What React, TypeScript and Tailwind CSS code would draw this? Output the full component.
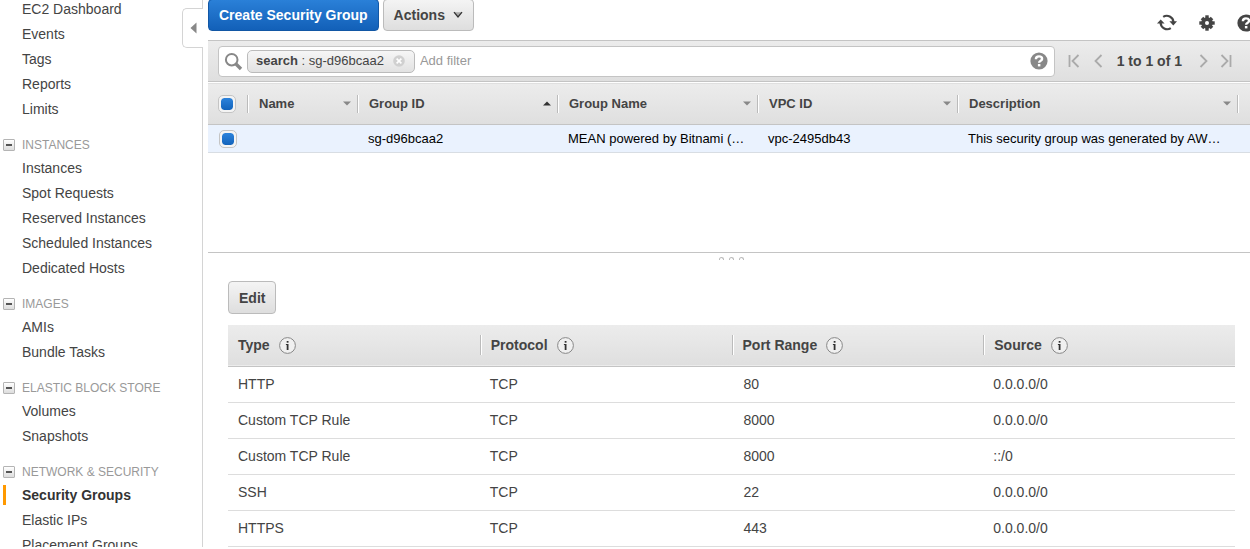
import React from "react";

type NavGroup = { title: string; items: string[] };

const topLinks = ["EC2 Dashboard", "Events", "Tags", "Reports", "Limits"];

const groups: NavGroup[] = [
  {
    title: "INSTANCES",
    items: ["Instances", "Spot Requests", "Reserved Instances", "Scheduled Instances", "Dedicated Hosts"],
  },
  { title: "IMAGES", items: ["AMIs", "Bundle Tasks"] },
  { title: "ELASTIC BLOCK STORE", items: ["Volumes", "Snapshots"] },
  { title: "NETWORK & SECURITY", items: ["Security Groups", "Elastic IPs", "Placement Groups"] },
];

const rules = [
  ["HTTP", "TCP", "80", "0.0.0.0/0"],
  ["Custom TCP Rule", "TCP", "8000", "0.0.0.0/0"],
  ["Custom TCP Rule", "TCP", "8000", "::/0"],
  ["SSH", "TCP", "22", "0.0.0.0/0"],
  ["HTTPS", "TCP", "443", "0.0.0.0/0"],
];

function NavLink({ label, active = false }: { label: string; active?: boolean }) {
  return (
    <li>
      <a
        href="#"
        aria-current={active ? "page" : undefined}
        className={
          active
            ? "flex h-[25px] items-center pl-[3px] font-bold text-[#333]"
            : "flex h-[25px] items-center pl-[22px]"
        }
      >
        {active && <span className="mr-4 h-5 w-[3px] bg-[#f90]" />}
        {label}
      </a>
    </li>
  );
}

function Sidebar() {
  return (
    <nav aria-label="EC2" className="w-[203px] shrink-0 overflow-hidden border-r border-[#d4d4d4]">
      <ul className="-mt-1">
        {topLinks.map((label) => (
          <NavLink key={label} label={label} />
        ))}
      </ul>
      {groups.map((group) => (
        <section key={group.title} className="pt-[14px]">
          <h2 className="flex h-5 items-center pl-[3px] text-[12px] text-[#999]">
            <button
              type="button"
              aria-label={`Collapse ${group.title}`}
              className="mr-[7px] flex size-3 items-center justify-center rounded-[1px] border border-[#b4b4b4] bg-linear-to-b from-white to-[#ddd]"
            >
              <span className="h-[2px] w-[6px] bg-[#555]" />
            </button>
            {group.title}
          </h2>
          <ul>
            {group.items.map((label) => (
              <NavLink key={label} label={label} active={label === "Security Groups"} />
            ))}
          </ul>
        </section>
      ))}
    </nav>
  );
}

function SortArrow({ up = false }: { up?: boolean }) {
  return (
    <svg width="8" height="5" viewBox="0 0 8 5" aria-hidden="true">
      {up ? <path d="M0 4.5L4 0.5L8 4.5Z" fill="#333" /> : <path d="M0 0.5H8L4 4.5Z" fill="#888" />}
    </svg>
  );
}

function BlueCheckbox({ label }: { label: string }) {
  return (
    <input
      type="checkbox"
      defaultChecked
      aria-label={label}
      className="block size-[18px] appearance-none rounded-[5px] border border-[#c4c4c4] bg-[#f4f4f4] p-px before:block before:size-full before:rounded-[4px] before:border before:border-[#f4f4f4] before:bg-linear-to-b before:from-[#2c83dc] before:to-[#1263bb] before:bg-clip-padding"
    />
  );
}

function HelpIcon({ fill }: { fill: string }) {
  return (
    <svg width="18" height="18" viewBox="0 0 18 18" className="block shrink-0" aria-hidden="true">
      <circle cx="9" cy="9" r="8.6" fill={fill} />
      <path
        d="M5.9 7.2C5.9 5.3 7.2 4.4 9 4.4S12.1 5.3 12.1 6.9C12.1 8.7 9.1 8.7 9.1 10.8"
        fill="none"
        stroke="#fff"
        strokeWidth="2.4"
      />
      <rect x="7.9" y="12" width="2.5" height="2.4" fill="#fff" />
    </svg>
  );
}

function InfoIcon() {
  return (
    <svg width="17" height="17" viewBox="0 0 17 17" className="block" aria-hidden="true">
      <circle cx="8.5" cy="8.5" r="7.9" fill="#f0f0f0" stroke="#888" />
      <rect x="7.7" y="4" width="1.8" height="1.7" fill="#333" />
      <path d="M6.9 7H9.5V13H7.7V7.9H6.9Z" fill="#333" />
    </svg>
  );
}

function RefreshIcon() {
  return (
    <svg width="20" height="17" viewBox="0 0 20 17" className="block" aria-hidden="true">
      <path d="M6.2 2.9A6.6 6.6 0 0 1 16.4 8" fill="none" stroke="#444" strokeWidth="2.2" />
      <path d="M13.8 14.1A6.6 6.6 0 0 1 3.6 9" fill="none" stroke="#444" strokeWidth="2.2" />
      <path d="M12.4 7.3H20L16.3 11.4Z" fill="#444" />
      <path d="M0 9.5H7.6L3.7 5.4Z" fill="#444" />
    </svg>
  );
}

function GearIcon() {
  return (
    <svg width="16" height="16" viewBox="0 0 16 16" className="block" aria-hidden="true">
      <g fill="#444">
        <rect x="6.3" y="0.3" width="3.4" height="15.4" />
        <rect x="0.3" y="6.3" width="15.4" height="3.4" />
        <rect x="6.2" y="0.9" width="3.6" height="14.2" transform="rotate(45 8 8)" />
        <rect x="6.2" y="0.9" width="3.6" height="14.2" transform="rotate(-45 8 8)" />
        <circle cx="8" cy="8" r="5.8" />
      </g>
      <circle cx="8" cy="8" r="2" fill="#fff" />
    </svg>
  );
}

function PageButton({ label, d }: { label: string; d: string }) {
  return (
    <button type="button" aria-label={label}>
      <svg width="12" height="14" viewBox="0 0 12 14" className="block" aria-hidden="true">
        <path d={d} fill="none" stroke="#aaa" strokeWidth="1.8" />
      </svg>
    </button>
  );
}

function ColumnHead({ label, sorted = false }: { label: string; sorted?: boolean }) {
  return (
    <th scope="col" aria-sort={sorted ? "ascending" : undefined} className="p-0 text-left">
      <span className="flex h-[18px] items-center justify-between border-l border-[#bbb] pr-[6px] pl-[11px] shadow-[inset_1px_0_0_#fff]">
        {label}
        <SortArrow up={sorted} />
      </span>
    </th>
  );
}

function Toolbar() {
  return (
    <header className="flex h-10 items-start">
      <button
        type="button"
        className="-mt-px h-8 rounded-[4px] border border-[#1257a5] bg-linear-to-b from-[#2a80d8] to-[#1260b8] px-[10px] font-bold text-white"
      >
        Create Security Group
      </button>
      <button
        type="button"
        className="-mt-px ml-1 flex h-8 items-center rounded-[4px] border border-[#bbb] bg-linear-to-b from-[#f4f4f4] to-[#dedede] px-[10px] font-bold"
      >
        Actions
        <svg width="10" height="8" viewBox="0 0 10 8" className="ml-2" aria-hidden="true">
          <path d="M1 1.2L5 6L9 1.2" fill="#aaa" stroke="#333" strokeWidth="1.3" />
        </svg>
      </button>
      <div className="-mr-[5px] ml-auto flex h-10 shrink-0 items-center gap-[22px] pt-[5px]">
        <button type="button" aria-label="Refresh">
          <RefreshIcon />
        </button>
        <button type="button" aria-label="Settings">
          <GearIcon />
        </button>
        <button type="button" aria-label="Help">
          <HelpIcon fill="#444" />
        </button>
      </div>
    </header>
  );
}

function FilterBar() {
  return (
    <div className="flex h-[42px] items-center border-y border-[#c4c4c4] bg-linear-to-b from-[#ececec] to-[#dfdfdf] pr-[18px] pl-[10px] text-[13px]">
      <div className="flex h-[31px] flex-1 items-center rounded-[4px] border border-[#c4c4c4] bg-white pr-[6px] pl-[5px]">
        <svg width="19" height="19" viewBox="0 0 19 19" aria-hidden="true">
          <circle cx="7.7" cy="7.7" r="5.8" fill="none" stroke="#888" strokeWidth="2" />
          <path d="M12 12L17 17" stroke="#888" strokeWidth="3.4" />
        </svg>
        <span className="ml-1 flex h-[23px] items-center rounded-[5px] border border-[#bbb] bg-linear-to-b from-[#f6f6f6] to-[#e2e2e2] pr-[9px] pl-2">
          <span className="whitespace-pre">
            <b>search</b> : sg-d96bcaa2
          </span>
          <button type="button" aria-label="Remove filter" className="ml-[9px]">
            <svg width="12" height="12" viewBox="0 0 12 12" className="block" aria-hidden="true">
              <circle cx="6" cy="6" r="5.8" fill="#d0d0d0" />
              <path d="M3.6 3.6L8.4 8.4M8.4 3.6L3.6 8.4" stroke="#fff" strokeWidth="1.6" />
            </svg>
          </button>
        </span>
        <input
          type="text"
          aria-label="Add filter"
          placeholder="Add filter"
          className="ml-[5px] min-w-0 flex-1 outline-none placeholder:text-[#999]"
        />
        <button type="button" aria-label="Filter help">
          <HelpIcon fill="#888" />
        </button>
      </div>
      <div className="ml-[13px] flex items-center">
        <PageButton label="First page" d="M1.5 1V13M10.5 1L4.5 7L10.5 13" />
        <span className="ml-[13px] flex">
          <PageButton label="Previous page" d="M8.5 1L2.5 7L8.5 13" />
        </span>
        <span className="mr-[15px] ml-3 text-[14px] font-bold whitespace-nowrap">1 to 1 of 1</span>
        <PageButton label="Next page" d="M3.5 1L9.5 7L3.5 13" />
        <span className="ml-[11px] flex">
          <PageButton label="Last page" d="M1.5 1L7.5 7L1.5 13M10.5 1V13" />
        </span>
      </div>
    </div>
  );
}

function GroupsTable() {
  return (
    <table className="w-full table-fixed border-collapse text-[13px]">
      <colgroup>
        <col className="w-[39px]" />
        <col className="w-[110px]" />
        <col className="w-[200px]" />
        <col className="w-[200px]" />
        <col className="w-[200px]" />
        <col />
        <col className="w-[13px]" />
      </colgroup>
      <thead>
        <tr className="h-[42px] border-t border-b border-t-white border-b-[#c4c4c4] bg-linear-to-b from-[#ececec] to-[#dfdfdf]">
          <th className="p-0 pl-[10px]">
            <BlueCheckbox label="Select all groups" />
          </th>
          <ColumnHead label="Name" />
          <ColumnHead label="Group ID" sorted />
          <ColumnHead label="Group Name" />
          <ColumnHead label="VPC ID" />
          <ColumnHead label="Description" />
          <th className="p-0">
            <span className="block h-[18px] border-l border-[#bbb] shadow-[inset_1px_0_0_#fff]" />
          </th>
        </tr>
      </thead>
      <tbody>
        <tr className="h-7 border-b border-[#d8dde3] bg-[#eaf2fe] whitespace-nowrap text-black">
          <td className="p-0 pl-[11px]">
            <BlueCheckbox label="Select sg-d96bcaa2" />
          </td>
          <td />
          <td className="p-0 pl-[11px]">sg-d96bcaa2</td>
          <td className="p-0 pl-[11px]">MEAN powered by Bitnami (…</td>
          <td className="p-0 pl-[11px]">vpc-2495db43</td>
          <td className="p-0 pl-[11px]">This security group was generated by AW…</td>
          <td />
        </tr>
      </tbody>
    </table>
  );
}

function RulesTable() {
  return (
    <table className="mt-[11px] w-full table-fixed border-collapse">
      <thead>
        <tr className="h-[41px] border-b border-[#c4c4c4] bg-linear-to-b from-[#ececec] to-[#dfdfdf]">
          {["Type", "Protocol", "Port Range", "Source"].map((label, i) => (
            <th key={label} scope="col" className="p-0 text-left">
              <span
                className={
                  i === 0
                    ? "flex h-5 items-center gap-[9px] pl-[10px]"
                    : "flex h-5 items-center gap-[9px] border-l border-[#bbb] pl-[10px] shadow-[inset_1px_0_0_#fff]"
                }
              >
                {label}
                <InfoIcon />
              </span>
            </th>
          ))}
        </tr>
      </thead>
      <tbody>
        {rules.map((rule, r) => (
          <tr key={r} className="h-9 border-b border-[#ddd]">
            {rule.map((cell, c) => (
              <td key={c} className={c === 2 ? "p-0 pl-3" : "p-0 pl-[10px]"}>
                {cell}
              </td>
            ))}
          </tr>
        ))}
      </tbody>
    </table>
  );
}

export default function App() {
  return (
    <div className="flex h-screen overflow-hidden bg-white pb-[2px] font-['Liberation_Sans',Arial,sans-serif] text-[14px] leading-5 text-[#444]">
      <div className="relative flex">
        <Sidebar />
        <button
          type="button"
          aria-label="Collapse navigation"
          className="absolute top-2 right-0 flex h-10 w-[21px] items-center justify-center rounded-l-[5px] border border-r-0 border-[#d4d4d4] bg-white"
        >
          <svg width="7" height="12" viewBox="0 0 7 12" aria-hidden="true">
            <path d="M6.5 0.5V11.5L0.5 6Z" fill="#888" />
          </svg>
        </button>
      </div>
      <main className="ml-[5px] min-w-0 flex-1">
        <Toolbar />
        <FilterBar />
        <div className="h-[171px] border-b border-[#c4c4c4]">
          <GroupsTable />
        </div>
        <div className="flex h-7 justify-center gap-[5px] pt-1 pl-1" aria-hidden="true">
          {[0, 1, 2].map((dot) => (
            <span key={dot} className="h-[3px] w-[5px] rounded-t-[3px] border border-b-0 border-[#bbb]" />
          ))}
        </div>
        <section className="pr-[15px] pl-5">
          <button
            type="button"
            className="block h-[33px] rounded-[4px] border border-[#bbb] bg-linear-to-b from-[#f4f4f4] to-[#dedede] px-[10px] font-bold"
          >
            Edit
          </button>
          <RulesTable />
        </section>
      </main>
    </div>
  );
}
